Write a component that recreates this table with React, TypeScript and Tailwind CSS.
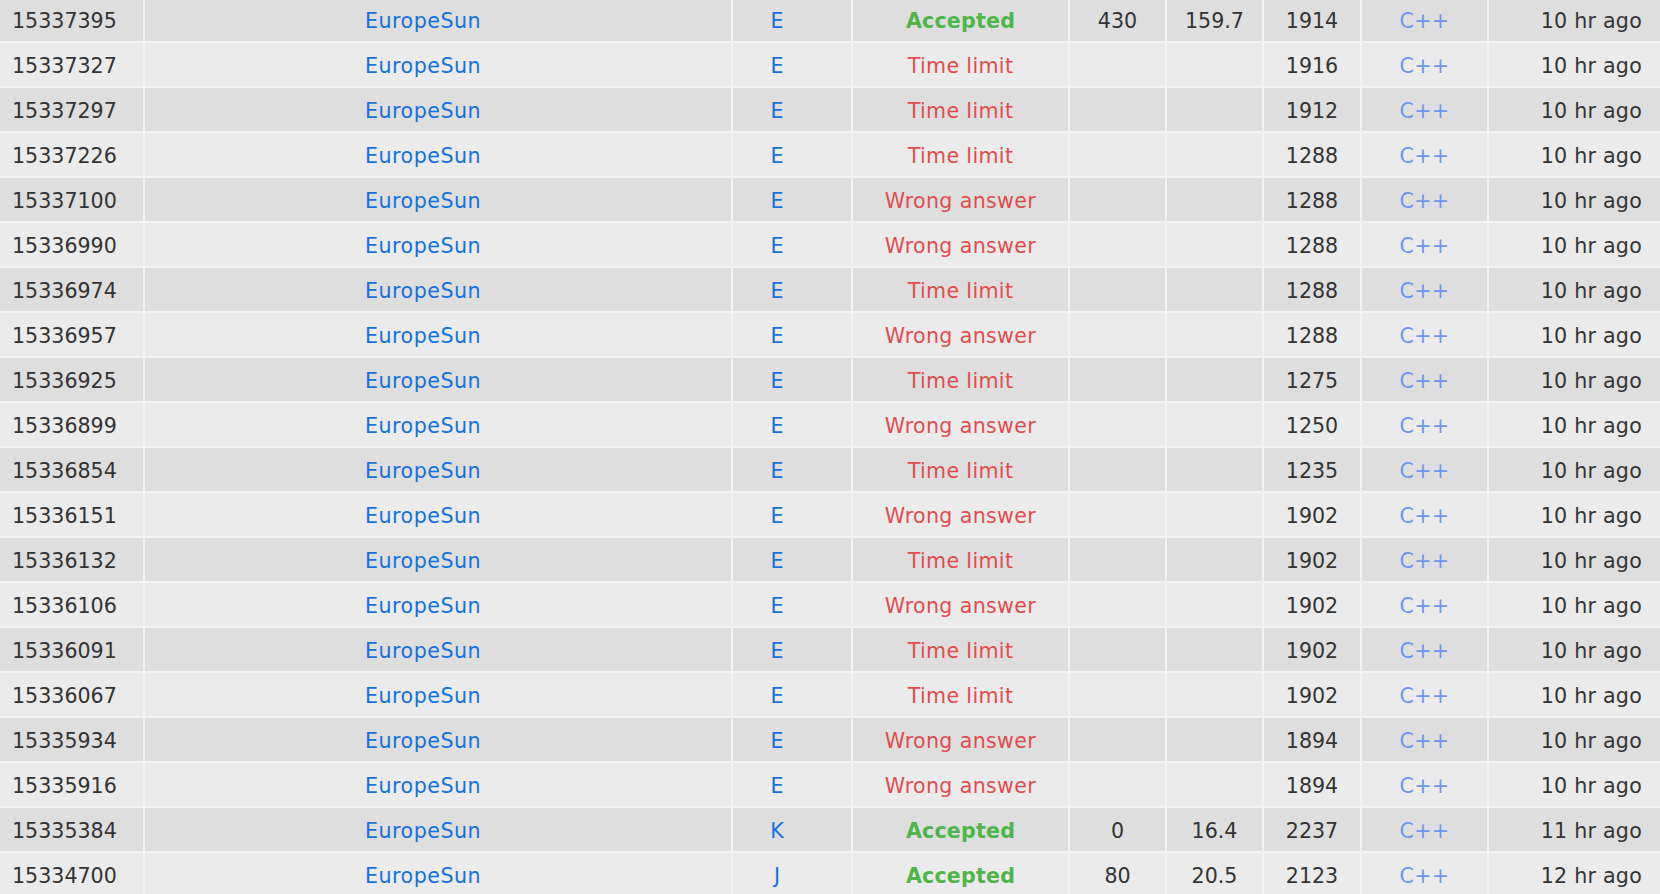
import React from "react";

type Row = {
  id: string;
  prob: string;
  status: "Accepted" | "Time limit" | "Wrong answer";
  score?: string;
  time?: string;
  mem: string;
  ago: string;
};

const rows: Row[] = [
  { id: "15337395", prob: "E", status: "Accepted", score: "430", time: "159.7", mem: "1914", ago: "10 hr ago" },
  { id: "15337327", prob: "E", status: "Time limit", mem: "1916", ago: "10 hr ago" },
  { id: "15337297", prob: "E", status: "Time limit", mem: "1912", ago: "10 hr ago" },
  { id: "15337226", prob: "E", status: "Time limit", mem: "1288", ago: "10 hr ago" },
  { id: "15337100", prob: "E", status: "Wrong answer", mem: "1288", ago: "10 hr ago" },
  { id: "15336990", prob: "E", status: "Wrong answer", mem: "1288", ago: "10 hr ago" },
  { id: "15336974", prob: "E", status: "Time limit", mem: "1288", ago: "10 hr ago" },
  { id: "15336957", prob: "E", status: "Wrong answer", mem: "1288", ago: "10 hr ago" },
  { id: "15336925", prob: "E", status: "Time limit", mem: "1275", ago: "10 hr ago" },
  { id: "15336899", prob: "E", status: "Wrong answer", mem: "1250", ago: "10 hr ago" },
  { id: "15336854", prob: "E", status: "Time limit", mem: "1235", ago: "10 hr ago" },
  { id: "15336151", prob: "E", status: "Wrong answer", mem: "1902", ago: "10 hr ago" },
  { id: "15336132", prob: "E", status: "Time limit", mem: "1902", ago: "10 hr ago" },
  { id: "15336106", prob: "E", status: "Wrong answer", mem: "1902", ago: "10 hr ago" },
  { id: "15336091", prob: "E", status: "Time limit", mem: "1902", ago: "10 hr ago" },
  { id: "15336067", prob: "E", status: "Time limit", mem: "1902", ago: "10 hr ago" },
  { id: "15335934", prob: "E", status: "Wrong answer", mem: "1894", ago: "10 hr ago" },
  { id: "15335916", prob: "E", status: "Wrong answer", mem: "1894", ago: "10 hr ago" },
  { id: "15335384", prob: "K", status: "Accepted", score: "0", time: "16.4", mem: "2237", ago: "11 hr ago" },
  { id: "15334700", prob: "J", status: "Accepted", score: "80", time: "20.5", mem: "2123", ago: "12 hr ago" },
];

export default function App() {
  return (
    <div
      className="w-[1660px] h-[894px] overflow-hidden bg-[#f3f3f3] text-[#333333] text-[20.6px] leading-none"
      style={{ fontFamily: '"DejaVu Sans", Verdana, sans-serif' }}
    >
      <div className="flex flex-col gap-[2px] mt-[-2px]">
        {rows.map((r, i) => {
          const cell = i % 2 === 0 ? "bg-[#dedede]" : "bg-[#ebebeb]";
          const base = `${cell} h-[43px] flex items-center pt-[4px]`;
          const statusCls =
            r.status === "Accepted"
              ? "text-[#4fb54b] font-bold tracking-[0.2px]"
              : "text-[#e04d4f] tracking-[0.35px]";
          return (
            <div
              key={r.id}
              className="grid grid-cols-[143px_586px_118px_215px_95px_95px_96px_125px_1fr] gap-[2px]"
            >
              <div className={`${base} pl-[12px]`}>{r.id}</div>
              <div className={`${base} pl-[220px]`}>
                <span className="text-[#1372dc] tracking-[0.5px]">EuropeSun</span>
              </div>
              <div className={`${base} justify-center pr-[30px]`}>
                <span className="text-[#1372dc]">{r.prob}</span>
              </div>
              <div className={`${base} justify-center`}>
                <span className={statusCls}>{r.status}</span>
              </div>
              <div className={`${base} justify-center`}>{r.score ?? ""}</div>
              <div className={`${base} justify-center`}>{r.time ?? ""}</div>
              <div className={`${base} justify-center`}>{r.mem}</div>
              <div className={`${base} justify-center`}>
                <span className="text-[#6f95f0] tracking-[0.3px]">C++</span>
              </div>
              <div className={`${base} justify-end pr-[18px]`}>
                <span className="tracking-[0.25px]">{r.ago}</span>
              </div>
            </div>
          );
        })}
      </div>
    </div>
  );
}
